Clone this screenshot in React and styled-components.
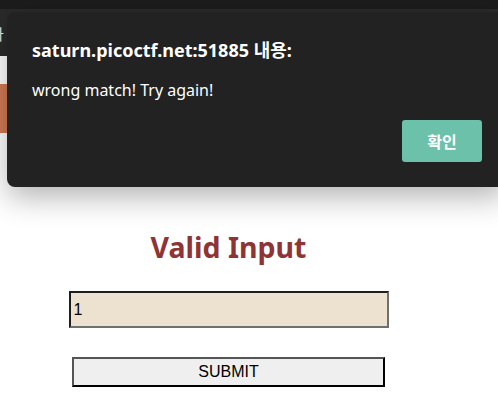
import React from 'react';
import styled, { createGlobalStyle } from 'styled-components';

const GlobalStyle = createGlobalStyle`
  html, body {
    margin: 0;
    padding: 0;
    background: #fff;
    overflow: hidden;
  }
  body {
    font-family: "Noto Sans", "Noto Sans CJK KR", sans-serif;
  }
`;

const Page = styled.div`
  position: relative;
  width: 498px;
  height: 407px;
  overflow: hidden;
`;

const TopStrip = styled.div`
  height: 9px;
  background: #1c1c1c;
`;

const NavBar = styled.div`
  height: 47px;
  background: #2a2a2a;
  display: flex;
  align-items: center;
  color: #e8e8e8;
  font-size: 15px;
  font-family: "Noto Sans CJK KR", sans-serif;
`;

const NavItem = styled.span`
  margin-left: -10px;
  margin-top: 2px;
`;

const Spacer = styled.div`
  height: ${(p) => p.h}px;
`;

const Banner = styled.div`
  height: 49px;
  background: #d27a55;
`;

const Main = styled.main`
  width: 457px;
  display: flex;
  flex-direction: column;
  align-items: center;
  padding-top: 94px;
`;

const Heading = styled.h1`
  margin: 0;
  font-family: "Noto Sans", sans-serif;
  font-weight: 700;
  font-size: 28.5px;
  line-height: 40px;
  color: #8f3434;
`;

const Field = styled.input`
  box-sizing: border-box;
  margin-top: 24px;
  width: 320px;
  height: 37px;
  padding: 0 3px;
  background: #ede2d0;
  border: 2px solid;
  border-color: #1e1e1e #6f6f6f #6f6f6f #1e1e1e;
  font-family: "Liberation Sans", Arial, sans-serif;
  font-size: 16px;
  color: #000;
  outline: none;
`;

const SubmitButton = styled.button`
  box-sizing: border-box;
  margin-top: 29px;
  width: 313px;
  height: 30px;
  background: #efefef;
  border: 2px solid;
  border-color: #555 #000 #000 #555;
  font-family: "Liberation Sans", Arial, sans-serif;
  font-size: 16px;
  color: #000;
  padding: 0;
`;

const Dialog = styled.div`
  position: absolute;
  left: 7px;
  top: 12px;
  width: 499px;
  height: 175px;
  box-sizing: border-box;
  padding: 26px 24px 0 25px;
  background: #222222;
  border-radius: 8px;
  box-shadow: 0 10px 30px rgba(0, 0, 0, 0.3);
  color: #fff;
  display: flex;
  flex-direction: column;
  font-family: "Noto Sans", "Noto Sans CJK KR", sans-serif;
`;

const DialogTitle = styled.div`
  font-size: 18px;
  font-weight: 700;
  line-height: 24px;
`;

const DialogMessage = styled.div`
  margin-top: 17px;
  font-size: 16px;
  line-height: 22px;
`;

const Actions = styled.div`
  display: flex;
  justify-content: flex-end;
  margin-top: 19px;
`;

const OkButton = styled.button`
  width: 80px;
  height: 42px;
  border: none;
  border-radius: 3px;
  background: #6bc1a9;
  color: #fff;
  font-family: "Noto Sans CJK KR", sans-serif;
  font-weight: 700;
  font-size: 16px;
`;

export default function App() {
  return (
    <>
      <GlobalStyle />
      <Page>
        <TopStrip />
        <NavBar>
          <NavItem>나</NavItem>
        </NavBar>
        <Spacer h={28} />
        <Banner />
        <Main>
          <Heading>Valid Input</Heading>
          <Field defaultValue="1" />
          <SubmitButton>SUBMIT</SubmitButton>
        </Main>

        <Dialog>
          <DialogTitle>saturn.picoctf.net:51885 내용:</DialogTitle>
          <DialogMessage>wrong match! Try again!</DialogMessage>
          <Actions>
            <OkButton>확인</OkButton>
          </Actions>
        </Dialog>
      </Page>
    </>
  );
}
